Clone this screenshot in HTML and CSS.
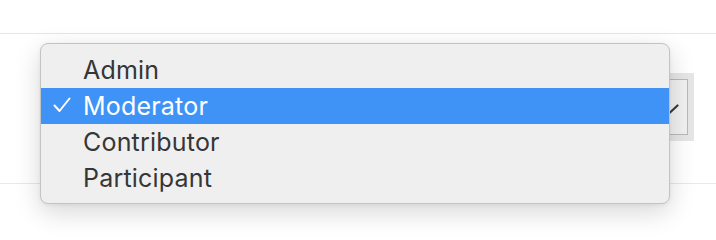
FILE: index.html
```html
<!DOCTYPE html>
<html>
<head>
<meta charset="utf-8">
<link rel="stylesheet" href="styles.css">
</head>
<body>
<div class="page">
  <header class="topbar"></header>
  <section class="content">
    <div class="select">
      <span class="select-label">Moderator</span>
      <svg class="chevron" width="18" height="10" viewBox="0 0 18 10"><path d="M1.5 1.5 L9 8.5 L16.5 1.5" fill="none" stroke="#3a3a3a" stroke-width="2.2" stroke-linecap="round" stroke-linejoin="round"/></svg>
    </div>
  </section>
  <div class="menu">
    <div class="item">Admin</div>
    <div class="item selected">
      <svg class="check" width="18" height="16" viewBox="0 0 18 16"><path d="M1.5 8.5 L6.5 14 L16.5 1.5" fill="none" stroke="#ffffff" stroke-width="2" stroke-linecap="round" stroke-linejoin="round"/></svg>
      Moderator
    </div>
    <div class="item">Contributor</div>
    <div class="item">Participant</div>
  </div>
</div>
</body>
</html>
```
FILE: styles.css
```css
html, body {
  margin: 0;
  padding: 0;
  background: #ffffff;
  font-family: Inter, "Helvetica Neue", "Liberation Sans", sans-serif;
}
.page {
  position: relative;
  width: 716px;
  height: 240px;
  overflow: hidden;
}
.topbar {
  height: 33px;
  border-bottom: 1px solid #e6e6e6;
}
.content {
  height: 149px;
  border-bottom: 1px solid #e8e8e8;
  display: flex;
  justify-content: flex-end;
  align-items: flex-start;
  padding-right: 28px;
}
.select {
  margin-top: 45px;
  width: 220px;
  height: 56px;
  box-sizing: border-box;
  border: 1.5px solid #b9b9b9;
  outline: 6px solid #e6e6e6;
  background: #f1f1f1;
  display: flex;
  align-items: center;
  justify-content: space-between;
  padding: 0 8px 0 14px;
  font-size: 22px;
  color: #333;
}
.chevron {
  margin-top: 4px;
}
.menu {
  position: absolute;
  left: 40px;
  top: 43px;
  width: 630px;
  box-sizing: border-box;
  padding: 8px 0 7px;
  background: #efefef;
  border: 1px solid #c3c3c3;
  border-radius: 8px;
  box-shadow: 0 8px 26px rgba(0, 0, 0, 0.16), 0 1px 4px rgba(0, 0, 0, 0.06);
}
.item {
  position: relative;
  height: 36px;
  line-height: 36px;
  padding-left: 42px;
  font-size: 25px;
  color: #363636;
  letter-spacing: 0.2px;
}
.item.selected {
  background: #3f93f7;
  color: #ffffff;
}
.check {
  position: absolute;
  left: 12px;
  top: 9px;
}
```
